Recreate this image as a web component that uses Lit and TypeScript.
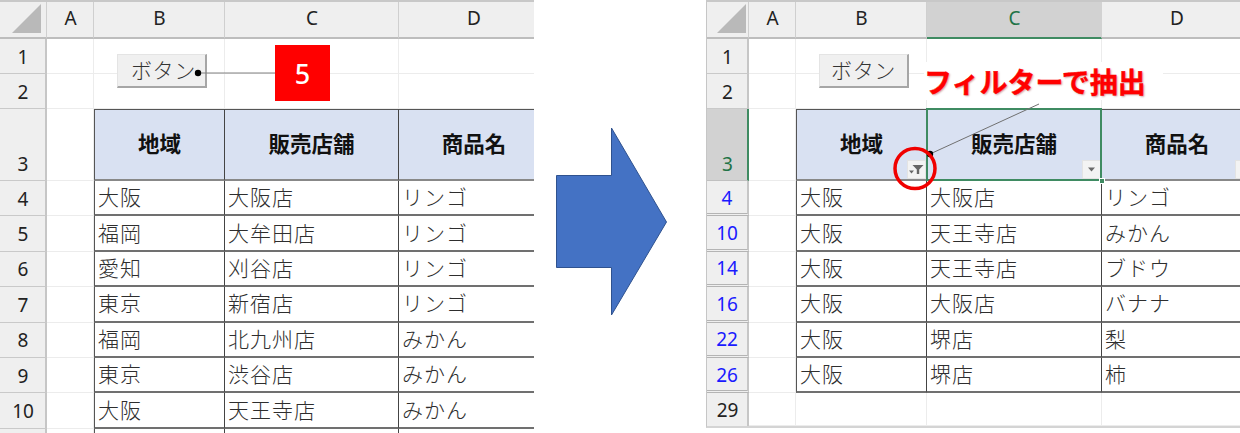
import { LitElement, html, css, svg } from "lit";
import { customElement, property } from "lit/decorators.js";

type Row = { n: string; cells: string[] };

const leftRows: Row[] = [
  { n: "4", cells: ["大阪", "大阪店", "リンゴ"] },
  { n: "5", cells: ["福岡", "大牟田店", "リンゴ"] },
  { n: "6", cells: ["愛知", "刈谷店", "リンゴ"] },
  { n: "7", cells: ["東京", "新宿店", "リンゴ"] },
  { n: "8", cells: ["福岡", "北九州店", "みかん"] },
  { n: "9", cells: ["東京", "渋谷店", "みかん"] },
  { n: "10", cells: ["大阪", "天王寺店", "みかん"] },
  { n: "", cells: ["", "", ""] },
];
const rightRows: Row[] = [
  { n: "4", cells: ["大阪", "大阪店", "リンゴ"] },
  { n: "10", cells: ["大阪", "天王寺店", "みかん"] },
  { n: "14", cells: ["大阪", "天王寺店", "ブドウ"] },
  { n: "16", cells: ["大阪", "大阪店", "バナナ"] },
  { n: "22", cells: ["大阪", "堺店", "梨"] },
  { n: "26", cells: ["大阪", "堺店", "柿"] },
];

@customElement("x-sheet")
class XSheet extends LitElement {
  @property({ type: Boolean }) filtered = false;
  @property() columns = "";

  static styles = css`
    :host { display: block; position: relative; width: 534px; height: 433px; overflow: hidden; background: #fff; }
    .grid { display: grid; font-family: "Noto Sans CJK JP", "Noto Sans", sans-serif; }
    .grid.left { margin-top: 2px; grid-template-rows: 37px 35px 35px 72px repeat(8, 35.4px); }
    .grid.right { margin-top: 2px; grid-template-rows: 37px 35px 35px 72px repeat(6, 35.4px) 33px; border-left: 1px solid #c6c6c6; border-bottom: 2px solid #d4d4d4; height: 424px; }
    .top { height: 2px; background: #c8c8c8; position: absolute; left: 0; right: 0; top: 0; }
    .hd { background: #efefef; display: flex; align-items: center; justify-content: center; color: #222; font-family: "Noto Sans", sans-serif; font-size: 19px; box-sizing: border-box; }
    .col { border-right: 1px solid #cfcfcf; border-bottom: 2px solid #bdbdbd; padding-bottom: 3px; padding-left: 1px; }
    .row { border-right: 2px solid #c6c6c6; border-bottom: 1px solid #c9c9c9; padding-top: 1px; padding-left: 1px; }
    .row.tall { align-items: flex-end; padding-bottom: 3px; }
    .row.hid { border-bottom: 3px double #b4b4b4; padding-left: 0; }
    .blue { color: #1a1aff; }
    .sel { background: #d2d2d2; color: #217346; }
    .col.sel { border-bottom-color: #3f8b62; border-right-color: #d2d2d2; }
    .row.sel { border-right-color: #3f8b62; border-bottom-color: #c0c0c0; }
    .c { border-right: 1px solid #ececec; border-bottom: 1px solid #ececec; box-sizing: border-box; }
    .c.last { border-right: 0; }
    .th { background: #d9e1f2; font-weight: 700; font-size: 21.5px; color: #111; display: flex; align-items: center; justify-content: center; box-sizing: border-box; border-top: 1px solid #555; border-right: 1px solid #444; border-bottom: 2px solid #888; position: relative; padding-bottom: 4px; line-height: 1; white-space: nowrap; }
    .th.first { border-left: 1px solid #555; }
    .td { font-size: 21px; font-weight: 300; color: #2e2e2e; display: flex; align-items: center; padding-left: 3px; padding-bottom: 2px; box-sizing: border-box; border-right: 1px solid #444; border-bottom: 2px solid #707070; white-space: nowrap; overflow: hidden; line-height: 1; letter-spacing: 1px; }
    .td.first { border-left: 1px solid #555; }
    .td.last, .th.last { border-right: 0; }
    .btnf { position: absolute; right: 0; bottom: 0; width: 19px; height: 19px; background: #f3f3f3; border: 1px solid #e3e3e3; box-sizing: border-box; display: flex; align-items: center; justify-content: center; }
    .th.last .btnf { right: auto; left: 133px; }
    .btnf svg { display: block; }
    .btn { position: absolute; top: 54px; width: 90px; height: 34px; box-sizing: border-box; background: #f0f0f0; border-right: 2px solid #a6a6a6; border-bottom: 2px solid #a6a6a6; border-top: 1px solid #e4e4e4; border-left: 1px solid #e4e4e4; font: 300 21px "Noto Sans CJK JP", sans-serif; color: #333; display: flex; align-items: center; justify-content: center; letter-spacing: 0.6px; line-height: 1; padding-bottom: 2px; }
    .five { position: absolute; left: 275px; top: 45px; width: 55px; height: 56px; background: #ff0000; color: #fff; font: 500 27px "Noto Sans", sans-serif; display: flex; align-items: center; justify-content: center; }
    .over { position: absolute; left: 0; top: 0; pointer-events: none; }
    .selbox { position: absolute; left: 220px; top: 108px; width: 176px; height: 73px; border: 2px solid #3f8b62; box-sizing: border-box; pointer-events: none; }
    .handle { position: absolute; right: -5px; bottom: -5px; width: 4px; height: 4px; background: #3f8b62; border: 1px solid #fff; }
    .callout { position: absolute; left: 218px; top: 62px; width: 239px; height: 38px; background: #fff; color: #ff0000; font: 700 28px "Noto Sans CJK JP", sans-serif; -webkit-text-stroke: 0.4px #ff0000; display: flex; align-items: center; line-height: 1; text-shadow: 1px 1px 2px rgba(120, 0, 0, .4); white-space: nowrap; }
  `;

  private filterBtn(active: boolean) {
    return html`<span class="btnf">
      <svg width="15" height="11" viewBox="0 0 15 11">
        ${active
          ? svg`<path d="M3.5 1H14.5L10.2 5.5V10H7.8V5.5Z" fill="#666"/><path d="M0 6.5H5L2.5 9.5Z" fill="#666"/>`
          : svg`<path d="M4 3.5h7L7.5 7.5Z" fill="#6a6a6a"/>`}
      </svg>
    </span>`;
  }

  render() {
    const f = this.filtered;
    const rows = f ? rightRows : leftRows;
    return html`
      <div class="top"></div>
      <div class="grid ${f ? "right" : "left"}" style="grid-template-columns:${this.columns}">
        <div class="hd col" style="padding:0">
          <svg width="30" height="30" viewBox="0 0 30 30" style="margin:0 0 1px 8px"><path d="M29 0V29H0Z" fill="#b9b9b9"/></svg>
        </div>
        <div class="hd col">A</div>
        <div class="hd col">B</div>
        <div class="hd col ${f ? "sel" : ""}">C</div>
        <div class="hd col">D</div>

        <div class="hd row">1</div><div class="c"></div><div class="c"></div><div class="c"></div><div class="c last"></div>
        <div class="hd row">2</div><div class="c"></div><div class="c"></div><div class="c"></div><div class="c last"></div>

        <div class="hd row tall ${f ? "sel" : ""}">3</div><div class="c"></div>
        <div class="th first">地域${f ? this.filterBtn(true) : ""}</div>
        <div class="th">販売店舗${f ? this.filterBtn(false) : ""}</div>
        <div class="th last">商品名${f ? this.filterBtn(false) : ""}</div>

        ${rows.map(
          (r) => html`
            <div class="hd row ${f ? "hid blue" : ""}">${r.n}</div><div class="c"></div>
            <div class="td first">${r.cells[0]}</div>
            <div class="td">${r.cells[1]}</div>
            <div class="td last">${r.cells[2]}</div>
          `
        )}
        ${f
          ? html`<div class="hd row" style="border-bottom:0">29</div><div class="c"></div><div class="c"></div><div class="c"></div><div class="c last"></div>`
          : ""}
      </div>

      ${f
        ? html`
            <div class="btn" style="left:113px">ボタン</div>
            <div class="selbox"><span class="handle"></span></div>
            <div class="callout">フィルターで抽出</div>
            <svg class="over" width="534" height="433">
              <line x1="224" y1="154" x2="333" y2="104" stroke="#707070" stroke-width="1"/>
              <circle cx="224" cy="154" r="3.2" fill="#000"/>
              <circle cx="209" cy="168.5" r="20" fill="none" stroke="#f00000" stroke-width="3.5"/>
            </svg>
          `
        : html`
            <div class="btn" style="left:117px;justify-content:flex-start;padding-left:13px">ボタン</div>
            <svg class="over" width="534" height="433">
              <line x1="198" y1="73" x2="275" y2="73" stroke="#808080" stroke-width="1"/>
              <circle cx="198" cy="73" r="3.2" fill="#000"/>
            </svg>
            <div class="five">5</div>
          `}
    `;
  }
}

@customElement("app-root")
export class AppRoot extends LitElement {
  static styles = css`
    :host { display: flex; width: 1240px; height: 433px; background: #fff; overflow: hidden; }
    .mid { width: 172px; height: 433px; }
    .mid svg { display: block; }
  `;
  render() {
    return html`
      <x-sheet .columns=${"47px 47px 131px 174px 150px"}></x-sheet>
      <div class="mid">
        <svg width="172" height="433" viewBox="534 0 172 433">
          <path d="M556.5 175.5H611.5V128L666.5 222L611.5 315V267.5H556.5Z" fill="#4472c4" stroke="#2f528f" stroke-width="1"/>
        </svg>
      </div>
      <x-sheet filtered .columns=${"42px 47px 131px 175px 150px"}></x-sheet>
    `;
  }
}
